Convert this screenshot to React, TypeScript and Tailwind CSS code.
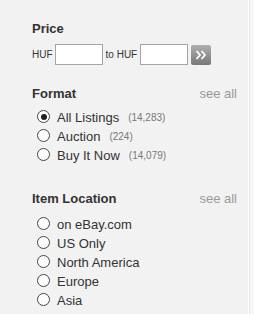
import React from 'react';

type Option = { label: string; count?: string; checked?: boolean };

const formatOptions: Option[] = [
  { label: 'All Listings', count: '(14,283)', checked: true },
  { label: 'Auction', count: '(224)' },
  { label: 'Buy It Now', count: '(14,079)' },
];

const locationOptions: Option[] = [
  { label: 'on eBay.com' },
  { label: 'US Only' },
  { label: 'North America' },
  { label: 'Europe' },
  { label: 'Asia' },
];

const Radio = ({ checked }: { checked?: boolean }) => (
  <span className="mt-[2px] flex h-[13px] w-[13px] shrink-0 items-center justify-center rounded-full border border-[#444] bg-white">
    {checked && <span className="h-[6px] w-[6px] rounded-full bg-[#1e1e1e]" />}
  </span>
);

const OptionRow = ({ option }: { option: Option }) => (
  <div className="flex h-[19px] items-start gap-[8px] pl-[5px]">
    <Radio checked={option.checked} />
    <span className="-ml-[1px] text-[13px] leading-[19px] text-[#333]">{option.label}</span>
    {option.count && (
      <span className="ml-[1px] text-[10px] leading-[19px] text-[#777]">{option.count}</span>
    )}
  </div>
);

const SectionTitle = ({ title, seeAll }: { title: string; seeAll?: boolean }) => (
  <div className="flex items-baseline justify-between leading-[16px]">
    <h3 className="text-[13px] font-bold text-[#333]">{title}</h3>
    {seeAll && <span className="text-[13px] text-[#999]">see all</span>}
  </div>
);

const App = () => {
  return (
    <div
      className="flex h-[314px] w-[254px] bg-[#f7f7f7]"
      style={{ fontFamily: '"Liberation Sans", Arial, sans-serif' }}
    >
      <section className="flex w-[248px] flex-col bg-[#f2f2f2] pl-[32px] pr-[11px] pt-[21px]">
        <SectionTitle title="Price" />
        <div className="mt-[7px] flex h-[21px] items-center text-[10px] text-[#333]">
          <span className="mr-[2px]">HUF</span>
          <input className="h-[21px] w-[48px] border border-[#a5a5a5] bg-white" />
          <span className="ml-[3px] mr-[3px]">to HUF</span>
          <input className="h-[21px] w-[48px] border border-[#a5a5a5] bg-white" />
          <button className="ml-[3px] flex h-[20px] w-[20px] items-center justify-center rounded-[2px] bg-gradient-to-b from-[#b0b0b0] to-[#787878]">
            <svg width="12" height="10" viewBox="0 0 12 10" fill="none" stroke="white" strokeWidth="1.8">
              <path d="M1.5 1 L5 5 L1.5 9" />
              <path d="M6.5 1 L10 5 L6.5 9" />
            </svg>
          </button>
        </div>

        <div className="mt-[21px]">
          <SectionTitle title="Format" seeAll />
        </div>
        <div className="mt-[6px] flex flex-col">
          {formatOptions.map((o) => (
            <OptionRow key={o.label} option={o} />
          ))}
        </div>

        <div className="mt-[26px]">
          <SectionTitle title="Item Location" seeAll />
        </div>
        <div className="mt-[8px] flex flex-col">
          {locationOptions.map((o) => (
            <OptionRow key={o.label} option={o} />
          ))}
        </div>
      </section>
      <div className="w-px bg-white" />
      <div className="w-px bg-[#e6e6e6]" />
    </div>
  );
};

export default App;
